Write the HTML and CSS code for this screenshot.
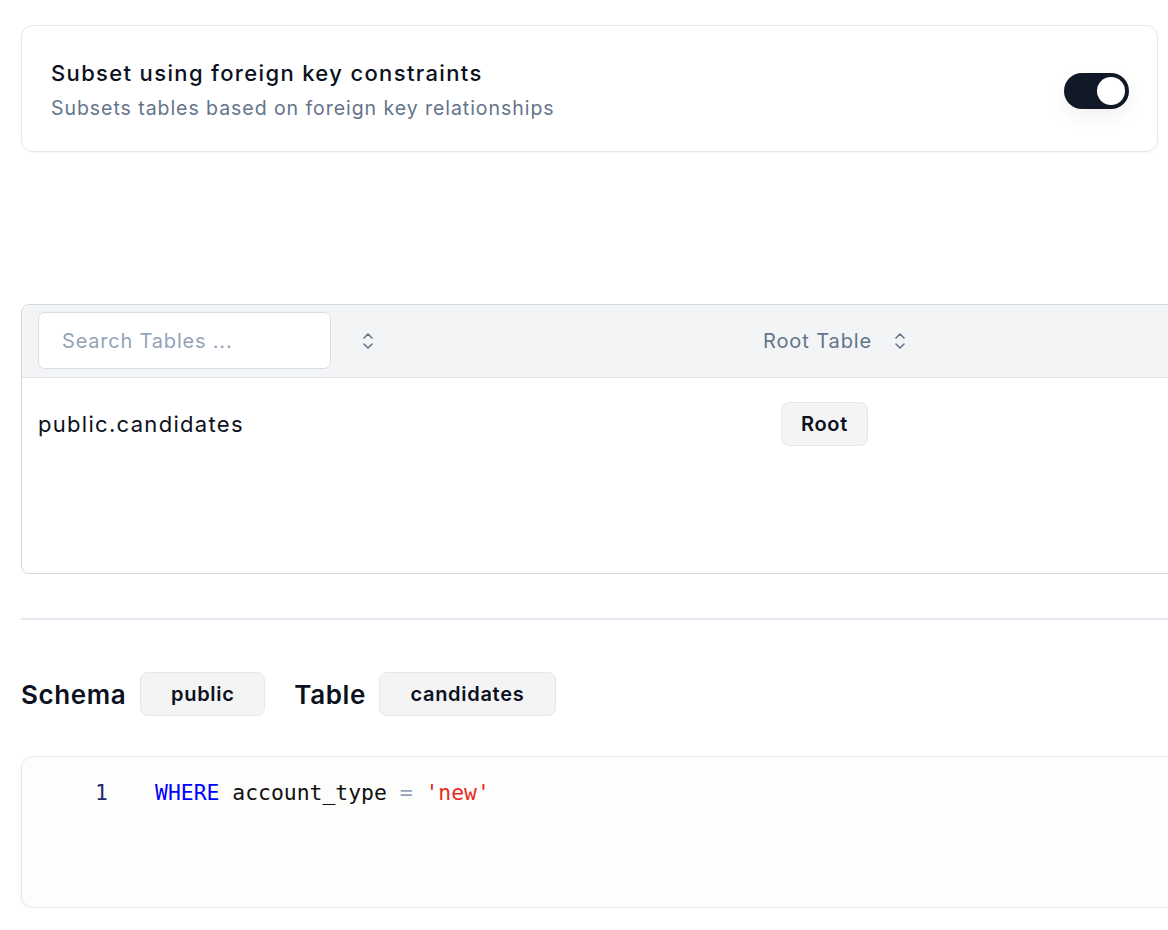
FILE: index.html
```html
<!DOCTYPE html>
<html>
<head>
<meta charset="utf-8">
<link rel="stylesheet" href="styles.css">
</head>
<body>
<div class="page">
  <div class="setting-card">
    <div class="setting-text">
      <div class="setting-title">Subset using foreign key constraints</div>
      <div class="setting-desc">Subsets tables based on foreign key relationships</div>
    </div>
    <div class="toggle"><div class="knob"></div></div>
  </div>

  <div class="table-card">
    <div class="table-head">
      <div class="col-name">
        <div class="search">Search Tables ...</div>
        <svg class="sort" width="16" height="20" viewBox="0 0 16 20" fill="none" stroke="currentColor" stroke-width="1.6" stroke-linecap="round" stroke-linejoin="round"><path d="M4 7l4-4 4 4"/><path d="M4 13l4 4 4-4"/></svg>
      </div>
      <div class="col-root">
        <span>Root Table</span>
        <svg class="sort" width="16" height="20" viewBox="0 0 16 20" fill="none" stroke="currentColor" stroke-width="1.6" stroke-linecap="round" stroke-linejoin="round"><path d="M4 7l4-4 4 4"/><path d="M4 13l4 4 4-4"/></svg>
      </div>
    </div>
    <div class="table-row">
      <div class="cell-name">public.candidates</div>
      <div class="cell-root"><span class="badge root-badge">Root</span></div>
    </div>
  </div>

  <div class="divider"></div>

  <div class="where-head">
    <span class="label">Schema</span>
    <span class="badge pill pill-schema">public</span>
    <span class="label">Table</span>
    <span class="badge pill pill-table">candidates</span>
  </div>

  <div class="editor">
    <div class="line">
      <span class="ln">1</span>
      <span class="code"><span class="kw">WHERE</span> account_type <span class="op">=</span> <span class="str">'new'</span></span>
    </div>
  </div>
</div>
</body>
</html>
```

FILE: styles.css
```css
html, body {
  margin: 0;
  padding: 0;
  background: #ffffff;
  overflow: hidden;
}
body {
  font-family: Inter, "Noto Sans", sans-serif;
  color: #0b1120;
}
.page {
  padding: 25px 0 0 21px;
  width: 1260px;
}
.setting-card {
  width: 1137px;
  box-sizing: border-box;
  border: 1px solid #e2e8f0;
  border-radius: 12px;
  padding: 33px 28px 29px 29px;
  display: flex;
  align-items: center;
  justify-content: space-between;
  box-shadow: 0 1px 2px rgba(15, 23, 42, 0.04);
}
.setting-title {
  font-size: 22px;
  line-height: 28px;
  font-weight: 500;
  letter-spacing: 1.35px;
  color: #0b1120;
}
.setting-desc {
  font-size: 19.5px;
  line-height: 28px;
  margin-top: 7px;
  letter-spacing: 0.95px;
  color: #64748b;
}
.toggle {
  width: 65px;
  height: 36px;
  border-radius: 18px;
  background: #111827;
  display: flex;
  align-items: center;
  justify-content: flex-end;
  padding: 0 4px;
  box-sizing: border-box;
  box-shadow: 0 8px 20px rgba(15, 23, 42, 0.06);
}
.knob {
  width: 28px;
  height: 28px;
  border-radius: 50%;
  background: #ffffff;
}
.table-card {
  margin-top: 152px;
  border: 1px solid #d4d8de;
  border-radius: 8px;
  height: 270px;
  box-sizing: border-box;
  overflow: hidden;
}
.table-head {
  background: #f3f4f6;
  height: 73px;
  border-bottom: 1px solid #e2e5ea;
  display: flex;
  align-items: center;
  box-sizing: border-box;
}
.col-name {
  width: 709px;
  display: flex;
  align-items: center;
  padding-left: 16px;
}
.search {
  width: 293px;
  height: 57px;
  box-sizing: border-box;
  border: 1px solid #d9dde3;
  border-radius: 7px;
  background: #ffffff;
  font-size: 20px;
  letter-spacing: 0.8px;
  color: #94a3b8;
  display: flex;
  align-items: center;
  padding-left: 23px;
  margin-top: -1px;
}
.sort {
  color: #64748b;
  margin-left: 29px;
}
.col-root {
  display: flex;
  align-items: center;
  font-size: 20px;
  letter-spacing: 0.9px;
  color: #64748b;
  padding-left: 16px;
}
.col-root .sort {
  margin-left: 20px;
}
.table-row {
  display: flex;
  align-items: flex-start;
  padding-top: 24px;
}
.cell-name {
  width: 725px;
  padding-left: 16px;
  font-size: 22px;
  letter-spacing: 1.3px;
  line-height: 44px;
}
.cell-root {
  padding-left: 18px;
}
.badge {
  display: inline-flex;
  align-items: center;
  justify-content: center;
  height: 44px;
  box-sizing: border-box;
  border: 1px solid #e5e7eb;
  border-radius: 8px;
  background: #f4f4f5;
  font-size: 20px;
  font-weight: 600;
  letter-spacing: 0.7px;
  color: #0b1120;
}
.root-badge {
  width: 87px;
}
.divider {
  margin-top: 44px;
  height: 2px;
  background: #e2e8f0;
}
.where-head {
  margin-top: 52px;
  display: flex;
  align-items: center;
}
.label {
  font-size: 26px;
  font-weight: 600;
  letter-spacing: 0.6px;
  color: #0b1120;
}
.pill-schema {
  width: 125px;
  margin-left: 14px;
  margin-right: 29px;
}
.pill-table {
  width: 177px;
  margin-left: 13px;
}
.editor {
  margin-top: 40px;
  height: 152px;
  box-sizing: border-box;
  border: 1px solid #e2e8f0;
  border-radius: 12px;
  background: #fdfdfc;
  padding-top: 21px;
  box-shadow: 0 2px 4px rgba(15, 23, 42, 0.04);
}
.line {
  display: flex;
  align-items: center;
  font-family: "DejaVu Sans Mono", monospace;
  font-size: 21.4px;
  line-height: 30px;
}
.ln {
  width: 86px;
  text-align: right;
  color: #1e2a6e;
}
.code {
  margin-left: 47px;
  color: #111111;
  white-space: pre;
}
.kw { color: #0000ff; }
.op { color: #94a3b8; }
.str { color: #e8291c; }
```
